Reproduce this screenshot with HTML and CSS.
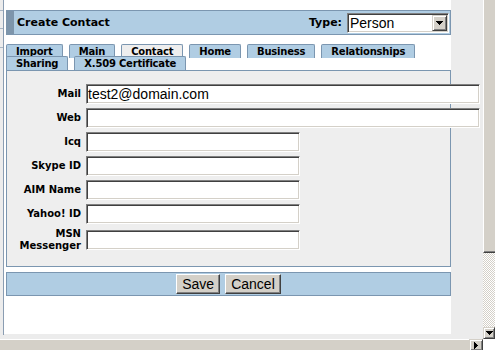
FILE: index.html
```html
<!DOCTYPE html>
<html lang="en">
<head>
    <meta charset="UTF-8">
    <meta name="viewport" content="width=device-width, initial-scale=1.0">
    <title>Create Contact</title>
    <link rel="stylesheet" href="styles.css">
</head>
<body>
    <div class="viewport">
        <div class="frame-edge">
            <span></span><span></span><span></span>
        </div>

        <div class="page">
            <div class="title-bar">
                <span class="title">Create Contact</span>
                <label class="type-field">Type:
                    <span class="select-box">
                        <select><option>Person</option><option>Organization</option></select>
                        <span class="arrow-btn">
                            <svg width="7" height="4" viewBox="0 0 7 4"><path d="M0 0h7v1h-1v1h-1v1h-1v1h-1v-1h-1v-1h-1v-1h-1z"/></svg>
                        </span>
                    </span>
                </label>
            </div>

            <ul class="tabs">
                <li>Import</li>
                <li>Main</li>
                <li class="active">Contact</li>
                <li>Home</li>
                <li>Business</li>
                <li>Relationships</li>
                <li>Sharing</li>
                <li>X.509 Certificate</li>
            </ul>

            <!-- вкладка Contact -->
            <div class="panel">
                <div class="form-grid">
                    <label>Mail</label><input type="text" class="wide" value="test2@domain.com">
                    <label>Web</label><input type="text" class="wide">
                    <label>Icq</label><input type="text">
                    <label>Skype ID</label><input type="text">
                    <label>AIM Name</label><input type="text">
                    <label>Yahoo! ID</label><input type="text">
                    <label>MSN<br>Messenger</label><input type="text">
                </div>
            </div>

            <div class="button-bar">
                <button>Save</button>
                <button>Cancel</button>
            </div>
        </div>
    </div>

    <div class="vscroll">
        <div class="thumb"></div>
        <div class="track"></div>
        <div class="scroll-btn">
            <svg width="7" height="4" viewBox="0 0 7 4"><path d="M0 0h7v1h-1v1h-1v1h-1v1h-1v-1h-1v-1h-1v-1h-1z"/></svg>
        </div>
    </div>

    <div class="hscroll">
        <div class="thumb"></div>
        <div class="scroll-btn">
            <svg width="4" height="7" viewBox="0 0 4 7"><path d="M0 0v7h1v-1h1v-1h1v-1h1v-1h-1v-1h-1v-1h-1v-1z"/></svg>
        </div>
    </div>

    <div class="corner"></div>
</body>
</html>
```

FILE: styles.css
```css
body { margin: 0; width: 495px; height: 350px; overflow: hidden; background: #ececec; display: grid; grid-template-columns: 483px 12px; grid-template-rows: 339px 11px; font-family: "DejaVu Sans", Verdana, sans-serif; }

.viewport { display: flex; align-items: flex-start; background: #ececec; }
.frame-edge { width: 4px; flex-shrink: 0; height: 335px; padding-top: 10px; box-sizing: border-box; border-right: 1px solid #8a9db2; display: flex; flex-direction: column; }
.frame-edge span { display: block; border-top: 1px solid #a9b6c4; height: 17px; }
.frame-edge span:nth-child(2) { height: 18px; }

.page { width: 447px; flex-shrink: 0; height: 334px; padding: 10px 0 0 2px; box-sizing: border-box; background: #fff; }

/* заголовок */
.title-bar { height: 25px; box-sizing: border-box; display: flex; align-items: center; justify-content: space-between; background: #b0cde3; border: 1px solid #7b96b0; border-left: 8px solid #7d95ab; padding: 0 1px 0 3px; }
.title { font-size: 11px; font-weight: bold; color: #000; }
.type-field { display: flex; align-items: center; gap: 5px; font-size: 11px; font-weight: bold; }
.select-box { display: flex; width: 102px; height: 20px; box-sizing: border-box; background: #fff; border: 1px solid; border-color: #808080 #fff #fff #808080; box-shadow: inset 1px 1px #404040, inset -1px -1px #d4d0c8; padding: 1px; }
.select-box select { flex: 1; min-width: 0; appearance: none; -webkit-appearance: none; border: none; background: transparent; font-family: "Liberation Sans", Arial, sans-serif; font-size: 14px; padding: 0 0 0 1px; margin: 0; outline: none; color: #000; }
.arrow-btn { width: 15px; box-sizing: border-box; display: flex; align-items: center; justify-content: center; background: #d4d0c8; border: 1px solid; border-color: #d4d0c8 #404040 #404040 #d4d0c8; box-shadow: inset 1px 1px #fff, inset -1px -1px #808080; }

/* вкладки */
.tabs { list-style: none; margin: 9px 0 0; padding: 0 0 2px; display: flex; flex-wrap: wrap; column-gap: 6px; }
.tabs li { height: 14px; box-sizing: border-box; margin-bottom: -2px; padding: 1px 9px 0; line-height: 12px; font-size: 10px; font-weight: bold; letter-spacing: -0.2px; background: #b0cde3; border: 1px solid #7b96b0; border-bottom: none; border-radius: 2px 2px 0 0; }
.tabs li.active { background: #eeeeee; }

.panel { background: #eeeeee; border: 1px solid #7b96b0; padding: 13px 0 14px; }
.form-grid { display: grid; grid-template-columns: 75px 1fr; column-gap: 4px; row-gap: 4px; align-items: center; justify-items: start; }
.form-grid label { justify-self: end; text-align: right; font-size: 10px; font-weight: bold; line-height: 12px; padding-right: 1px; }
.form-grid input { width: 214px; height: 20px; box-sizing: border-box; margin: 0; padding: 0 1px; background: #fff; border: 1px solid; border-color: #808080 #fff #fff #808080; box-shadow: inset 1px 1px #404040, inset -1px -1px #d4d0c8; font-family: "Liberation Sans", Arial, sans-serif; font-size: 14px; color: #000; outline: none; }
.form-grid input.wide { width: 394px; }

.button-bar { margin-top: 5px; background: #b0cde3; border: 1px solid #7b96b0; padding: 1px; display: flex; justify-content: center; gap: 5px; }
.button-bar button { height: 20px; margin: 0; padding: 0 5px; background: #d4d0c8; border: 1px solid; border-color: #fff #404040 #404040 #fff; box-shadow: inset -1px -1px #808080; font-family: "Liberation Sans", Arial, sans-serif; font-size: 14px; color: #000; line-height: 16px; }

/* полосы прокрутки */
.vscroll { display: flex; flex-direction: column; background: #d4d0c8; }
.vscroll .thumb { height: 253px; box-sizing: border-box; background: #d4d0c8; border-left: 1px solid #fff; border-bottom: 1px solid #404040; box-shadow: inset 0 -1px #808080; }
.vscroll .track { flex: 1; background: repeating-conic-gradient(#fff 0 25%, #d4d0c8 0 50%) 0 0 / 2px 2px; }
.scroll-btn { box-sizing: border-box; display: flex; align-items: center; justify-content: center; background: #d4d0c8; border: 1px solid; border-color: #d4d0c8 #404040 #404040 #d4d0c8; box-shadow: inset 1px 1px #fff, inset -1px -1px #808080; }
.vscroll .scroll-btn { height: 12px; }

.hscroll { display: flex; background: #d4d0c8; }
.hscroll .thumb { flex: 1; border-top: 1px solid #fff; }
.hscroll .scroll-btn { width: 14px; height: 12px; }
.corner { background: #fff; }
```
